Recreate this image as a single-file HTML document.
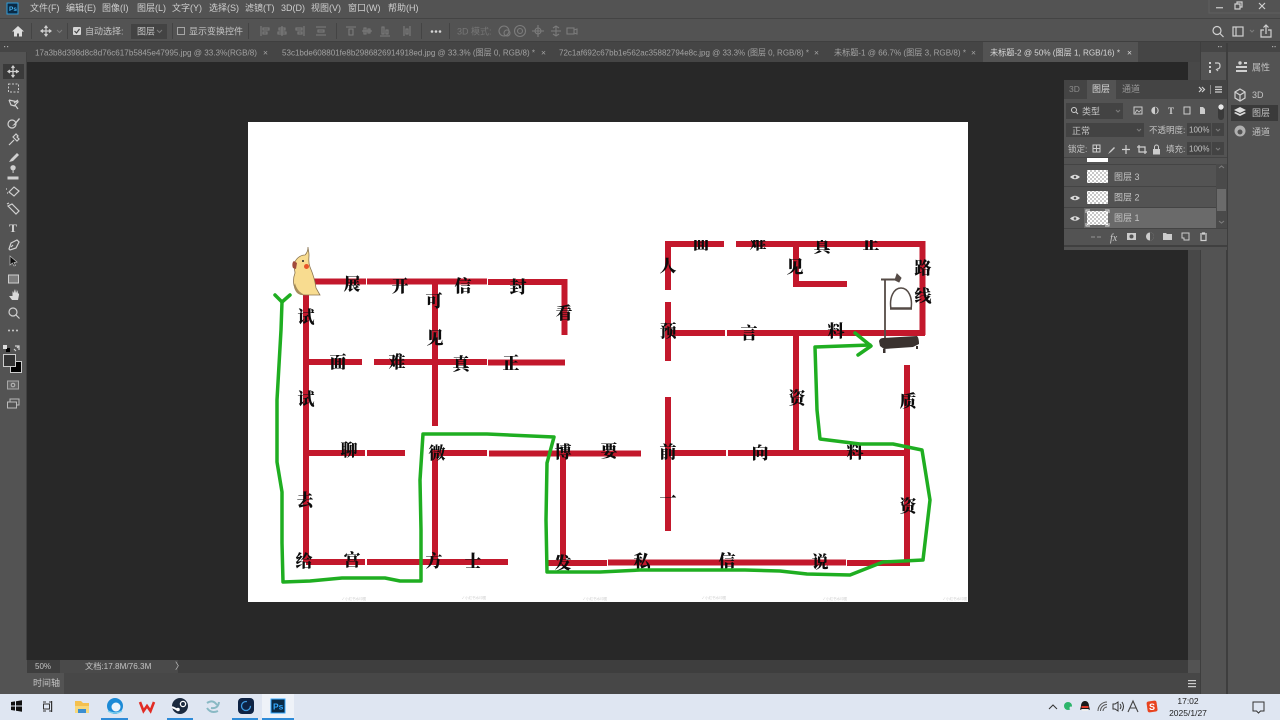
<!DOCTYPE html>
<html lang="zh-CN">
<head>
<meta charset="utf-8">
<title>Photoshop</title>
<style>
html,body{margin:0;padding:0;background:#535353;width:1280px;height:720px;overflow:hidden}
svg{display:block}
text{font-family:"Liberation Sans","Noto Sans CJK SC",sans-serif;font-size:9px;fill:#c4c4c4}
.m text{font-size:9px;fill:#cfcfcf}
.tab{font-size:8.5px;fill:#a2a2a2}
.ch text{font-family:"Liberation Serif","Noto Serif CJK SC",serif;font-size:17px;font-weight:900;fill:#0c0c0c;text-anchor:middle}
.wm{font-size:3.5px;fill:#cfcfcf;text-anchor:middle}
.ic{fill:none;stroke:#d0d0d0;stroke-width:1.2}
.dim{fill:none;stroke:#7c7c7c;stroke-width:1.1}
.sm{fill:#bdbdbd}
</style>
</head>
<body>
<svg width="1280" height="720" viewBox="0 0 1280 720" xmlns="http://www.w3.org/2000/svg">
<defs><clipPath id="topc"><rect x="660" y="240" width="270" height="30"/></clipPath></defs>

<!-- base -->
<rect width="1280" height="720" fill="#535353"/>
<rect x="0" y="18" width="1280" height="1" fill="#444"/>
<rect x="0" y="41" width="1280" height="1" fill="#3f3f3f"/>

<!-- menu bar -->
<rect x="7" y="3" width="11" height="11" fill="#0a2a45" stroke="#2f9bd8" stroke-width="1"/>
<text x="9" y="11" style="font-size:6.5px;fill:#45b2ef;font-weight:bold">Ps</text>
<g class="m">
<text x="30" y="11">文件(F)</text>
<text x="66" y="11">编辑(E)</text>
<text x="102" y="11">图像(I)</text>
<text x="137" y="11">图层(L)</text>
<text x="172" y="11">文字(Y)</text>
<text x="209" y="11">选择(S)</text>
<text x="245" y="11">滤镜(T)</text>
<text x="281" y="11">3D(D)</text>
<text x="311" y="11">视图(V)</text>
<text x="348" y="11">窗口(W)</text>
<text x="388" y="11">帮助(H)</text>
</g>
<!-- window controls -->
<rect x="1209" y="-1" width="72" height="14" fill="none" stroke="#5f5f5f"/>
<rect x="1216" y="7" width="7" height="1.4" fill="#bbb"/>
<path d="M1235 4h5v5h-5zM1237 4v-2h5v5h-2" class="ic" stroke-width="1"/>
<path d="M1259 3l6 6M1265 3l-6 6" class="ic"/>

<!-- options bar -->
<path d="M18 26l6 5.500h-2v5h-3v-3h-2v3h-3v-5h-2z" fill="#dedede"/>
<rect x="31" y="23" width="1" height="16" fill="#444"/>
<path d="M46 26v10M41 31h10M44.500 28l1.500-2 1.500 2M44.500 34l1.500 2 1.500-2M43 29.500l-2 1.500 2 1.500M49 29.500l2 1.500-2 1.500" class="ic"/>
<path d="M57 30l2.500 2.500 2.500-2.500" class="dim"/>
<rect x="67" y="23" width="1" height="16" fill="#444"/>
<rect x="73" y="27" width="8" height="8" rx="1" fill="#d5d5d5"/>
<path d="M74.500 31l2 2 3-4" fill="none" stroke="#444" stroke-width="1.200"/>
<text x="85" y="34.500">自动选择:</text>
<rect x="131" y="24" width="36" height="15" fill="#434343"/>
<text x="137" y="34.500">图层</text>
<path d="M157 30l2.500 2.500 2.500-2.500" class="dim"/>
<rect x="172" y="23" width="1" height="16" fill="#444"/>
<rect x="177.500" y="27.500" width="7" height="7" fill="none" stroke="#a5a5a5"/>
<text x="189" y="34.500">显示变换控件</text>
<rect x="248" y="23" width="1" height="16" fill="#444"/>
<g class="dim" stroke-width="1.300">
<path d="M261 26v10M263 28h6v2h-6zM263 32h4v2h-4z"/>
<path d="M282 26v10M279 28h6v2h-6zM278 32h8v2h-8z"/>
<path d="M304 26v10M296 28h6v2h-6zM298 32h4v2h-4z"/>
<path d="M316 27h10M316 35h10M318 30h6v2h-6z"/>
<path d="M346 27h10M349 29h4v6h-4z"/>
<path d="M362 31h10M364 28h2v6h-2zM368 29h2v4h-2z"/>
<path d="M380 36h10M382 27h2v7h-2zM386 30h2v4h-2z"/>
<path d="M404 26v10M410 26v10M406 29h2v5h-2z"/>
</g>
<rect x="336" y="23" width="1" height="16" fill="#444"/>
<rect x="421" y="23" width="1" height="16" fill="#444"/>
<circle cx="432" cy="31.500" r="1.300" fill="#d5d5d5"/><circle cx="436" cy="31.500" r="1.300" fill="#d5d5d5"/><circle cx="440" cy="31.500" r="1.300" fill="#d5d5d5"/>
<rect x="449" y="23" width="1" height="16" fill="#444"/>
<text x="457" y="34.500" style="fill:#767676">3D 模式:</text>
<g class="dim">
<circle cx="504" cy="31" r="5"/><circle cx="507" cy="33" r="3"/>
<circle cx="520" cy="31" r="5.500"/><circle cx="520" cy="31" r="2.500"/>
<path d="M538 25v12M532 31h12"/><circle cx="538" cy="31" r="3"/>
<path d="M556 26v10M551 31h10M553 28l3-2 3 2M553 34l3 2 3-2"/>
<rect x="567" y="28" width="7" height="6"/><path d="M574 30l3-1v5l-3-1"/>
</g>
<circle cx="1217" cy="30.500" r="4" class="ic"/><path d="M1220 33.500l3.500 3.500" class="ic"/>
<rect x="1233" y="27" width="10" height="9" class="ic"/><path d="M1236 27v9" class="ic"/>
<path d="M1250 30l2 2 2-2" class="dim"/>
<path d="M1264 30h-3v7h10v-7h-3M1266 34v-9M1263.500 27.500l2.500-2.500 2.500 2.500" class="ic"/>

<!-- tab strip + canvas bg -->
<rect x="0" y="42" width="1280" height="20" fill="#454545"/>
<rect x="27" y="62" width="1161" height="598" fill="#282828"/>
<rect x="983" y="42" width="155" height="20" fill="#535353"/>
<text class="tab" x="35" y="55.500" textLength="222" lengthAdjust="spacingAndGlyphs">17a3b8d398d8c8d76c617b5845e47995.jpg @ 33.3%(RGB/8)</text>
<text class="tab" x="263" y="55.500">×</text>
<text class="tab" x="282" y="55.500" textLength="253" lengthAdjust="spacingAndGlyphs">53c1bde608801fe8b2986826914918ed.jpg @ 33.3% (图层 0, RGB/8) *</text>
<text class="tab" x="541" y="55.500">×</text>
<text class="tab" x="559" y="55.500" textLength="250" lengthAdjust="spacingAndGlyphs">72c1af692c67bb1e562ac35882794e8c.jpg @ 33.3% (图层 0, RGB/8) *</text>
<text class="tab" x="814" y="55.500">×</text>
<text class="tab" x="834" y="55.500" textLength="132" lengthAdjust="spacingAndGlyphs">未标题-1 @ 66.7% (图层 3, RGB/8) *</text>
<text class="tab" x="971" y="55.500">×</text>
<text class="tab" x="990" y="55.500" textLength="130" lengthAdjust="spacingAndGlyphs" style="fill:#d8d8d8">未标题-2 @ 50% (图层 1, RGB/16) *</text>
<text class="tab" x="1127" y="55.500" style="fill:#d8d8d8">×</text>

<!-- left toolbar -->
<rect x="0" y="52" width="27" height="642" fill="#535353"/>
<rect x="26" y="52" width="1" height="608" fill="#404040"/>
<rect x="4" y="46" width="1.200" height="1.200" fill="#aaa"/><rect x="7" y="46" width="1.200" height="1.200" fill="#aaa"/>
<rect x="3" y="64" width="21" height="15" fill="#3a3a3a"/>
<path d="M13 66v11M8 71.500h11M11.500 68l1.500-2 1.500 2M11.500 75l1.500 2 1.500-2M10 70l-2 1.500 2 1.500M16 70l2 1.500-2 1.500" class="ic"/>
<rect x="8.500" y="84" width="10" height="8" fill="none" stroke="#c8c8c8" stroke-dasharray="2 1.500"/>
<path d="M9 100l9 2-3 3 3 4M9 100l2 5 4 1M18 100l-4 3" class="ic"/>
<circle cx="12" cy="124" r="4" class="ic"/><path d="M19 118l-5 6-2 2 3-1 5-6z" fill="#d0d0d0"/>
<path d="M9 145l5-5M13 137l4 4 2-2-2-2 1-1-2-2-1 1-2 2z" class="ic"/>
<path d="M9 162l2-3 6-6 2 2-6 6z" fill="#d0d0d0"/>
<path d="M13 170a2.200 2.200 0 1 1 .1 0v3M8 177h10v2h-10z" fill="#d0d0d0" stroke="#d0d0d0"/>
<path d="M9 192l5-5 5 4-5 5zM6 189h1M7 193h1" class="ic"/>
<path d="M8 206l4-2 7 7-3 3-7-7zM7 204l2-1" class="ic"/>
<text x="9" y="232" style="font-size:12px;font-weight:bold;fill:#d5d5d5;font-family:'Liberation Serif',serif">T</text>
<path d="M9 249l2-6 6-3 2 2-3 6-6 2zM11 247l2-2" class="ic"/>
<path d="M10 256l7 6-3 .5 1.500 3-1.500 .5-1.500-3-2.500 2z" fill="#101010" stroke="#bbb" stroke-width=".7"/>
<rect x="8.500" y="275" width="10" height="8" fill="#7d7d7d" stroke="#cfcfcf"/>
<path d="M9 296l3 4h6l1-5v-2l-1 1-.5-4-1 3-.5-4-1 4-.5-4-1 4-1-2v5z" fill="#d8d8d8"/>
<circle cx="13" cy="312" r="4" class="ic"/><path d="M16 315l3.500 3.500" class="ic" stroke-width="1.600"/>
<circle cx="9" cy="330.500" r="1" fill="#ccc"/><circle cx="13" cy="330.500" r="1" fill="#ccc"/><circle cx="17" cy="330.500" r="1" fill="#ccc"/>
<rect x="6" y="348" width="4" height="4" fill="#000"/><rect x="3" y="345" width="4" height="4" fill="#ddd"/>
<path d="M15 346h4v4M19 346l-2 2M14 349l2 2" class="ic" stroke-width=".9"/>
<rect x="10.500" y="361.500" width="11" height="11" fill="#000" stroke="#ccc"/>
<rect x="3.500" y="354.500" width="12" height="12" fill="#333" stroke="#ccc"/>
<rect x="7.500" y="381" width="11" height="8" fill="#656565" stroke="#a8a8a8"/><circle cx="13" cy="385" r="1.800" fill="none" stroke="#bbb"/>
<rect x="10" y="399" width="9" height="6" fill="none" stroke="#bbb"/><rect x="7.500" y="402" width="9" height="6" fill="#535353" stroke="#bbb"/>

<!-- canvas -->
<rect x="248" y="122" width="720" height="480" fill="#fff"/>
<text class="wm" x="354" y="600">✓ 小红书水印图</text>
<text class="wm" x="474" y="599">✓ 小红书水印图</text>
<text class="wm" x="595" y="600">✓ 小红书水印图</text>
<text class="wm" x="714" y="599">✓ 小红书水印图</text>
<text class="wm" x="835" y="600">✓ 小红书水印图</text>
<text class="wm" x="955" y="600">✓ 小红书水印图</text>

<!-- red maze -->
<g fill="none" stroke="#c3182c" stroke-width="6">
<path d="M303 281.500H366M367 281.500H487M488 282H567"/>
<path d="M564.500 279V335"/>
<path d="M306 282V562"/>
<path d="M306 362H362M374 362H487M488 362.500H565"/>
<path d="M435 282V426"/>
<path d="M306 453H365M367 453H405"/>
<path d="M435 453H487M489 453.500H641"/>
<path d="M435 450V562"/>
<path d="M306 562H365M367 562H508"/>
<path d="M563 453V563"/>
<path d="M548 563H607M608 562.500H846M847 563H910"/>
<path d="M668 453H726M728 453H907"/>
<path d="M668 397V531"/>
<path d="M796 333V453"/>
<path d="M907 365V566"/>
<path d="M665 244H724M736 244H925"/>
<path d="M922.500 241V335"/>
<path d="M668 241V290M668 302V361"/>
<path d="M668 333H725M727 333H925"/>
<path d="M796 244V287M793 284H847"/>
</g>

<!-- characters -->
<g class="ch">
<text x="352" y="290">展</text><text x="400" y="292">开</text><text x="463" y="292">信</text><text x="518" y="293">封</text>
<text x="434" y="307">可</text><text x="435" y="344">见</text><text x="564" y="319">看</text>
<text x="306" y="323">试</text><text x="306" y="405">试</text>
<text x="338" y="368">面</text><text x="397" y="368">难</text><text x="461" y="370">真</text><text x="511" y="369">正</text>
<text x="349" y="456">聊</text><text x="437" y="459">微</text><text x="563" y="458">博</text><text x="609" y="457">要</text>
<text x="668" y="458">前</text><text x="760" y="459">向</text><text x="855" y="458">料</text>
<text x="305" y="506">去</text><text x="668" y="504">一</text>
<text x="304" y="567">给</text><text x="352" y="566">宫</text><text x="434" y="567">方</text><text x="473" y="567">士</text>
<text x="563" y="569">发</text><text x="642" y="567">私</text><text x="727" y="567">信</text><text x="820" y="568">说</text>
<text x="908" y="512">资</text><text x="908" y="407">质</text><text x="797" y="404">资</text>
<text x="668" y="337">预</text><text x="749" y="339">言</text><text x="836" y="337">料</text>
<text x="668" y="272">人</text><text x="795" y="273">见</text><text x="923" y="274">路</text><text x="923" y="302">线</text>
<g clip-path="url(#topc)">
<text x="701" y="249">面</text><text x="758" y="249">难</text><text x="822" y="252">真</text><text x="871" y="249">正</text>
</g>
</g>

<!-- bird -->
<path d="M308 247c0 4-1 6-3 8-5 0-10 4-11 10 0 4 1 6 1 8-2 5-2 11 0 15 2 5 6 7 10 7h15l-4-7c-1-8-3-14-6-21-2-5-1-8-1-12 0-3-1-6-1-8z" fill="#f8dc90" stroke="#8a7450" stroke-width=".8"/>
<path d="M295 283c1 5 4 9 8 11l-2 1c-4-1-6-4-7-8z" fill="#a68d5c"/>
<path d="M294 261c-2 1-2 5-1 7l3 1 1-6z" fill="#a14a3c"/>
<circle cx="306.500" cy="266.500" r="2.500" fill="#e8552a"/>
<circle cx="303" cy="261" r="1" fill="#222"/>

<!-- perch -->
<g fill="none" stroke="#554b46">
<path d="M885 280V338" stroke-width="1.800"/>
<path d="M881 279.500h19" stroke-width="2"/>
<path d="M897 274l4 4-2 4-4-2z" fill="#554b46" stroke-width="1"/>
<path d="M891 309c-2-12 3-21 10-21 7 0 12 9 10 21" stroke-width="1.500"/>
<path d="M890 308.500h22" stroke-width="2.500"/>
</g>
<path d="M879 341q1-3 4-3l34-2q2 2 2 8l-6 3-29 2-4-3z" fill="#3a322f"/>
<rect x="883" y="349" width="2.500" height="4" fill="#3a322f"/>
<rect x="916" y="346" width="2" height="3" fill="#3a322f"/>

<!-- green path -->
<g fill="none" stroke="#1fae21" stroke-width="3.500" stroke-linejoin="round" stroke-linecap="round">
<path d="M275 295l7 7 8-7"/>
<path d="M282 302L281 330 277 400 277 462 282 492 282 543 283 582 310 581 342 578 385 578 400 581 421 581 421 530 420 480 423 434 487 434 554 437 547 463 546 520 547 572 600 572 640 570 745 570 780 571 807 574 850 575 883 562 923 560 930 500 922 450 893 444 860 444 820 439 817 410 815 347 870 345"/>
<path d="M855 333l16 13-13 9"/>
</g>

<!-- right dock -->
<rect x="1188" y="62" width="12" height="598" fill="#484848"/>
<rect x="1200" y="42" width="1" height="652" fill="#3e3e3e"/>
<rect x="1201" y="43" width="25" height="651" fill="#535353"/>
<rect x="1226" y="43" width="2" height="651" fill="#3e3e3e"/>
<rect x="1228" y="43" width="52" height="651" fill="#535353"/>
<rect x="1201" y="43" width="25" height="9" fill="#454545"/>
<rect x="1228" y="43" width="52" height="9" fill="#454545"/>
<rect x="1218" y="46" width="1.200" height="1.200" fill="#aaa"/><rect x="1220.500" y="46" width="1.200" height="1.200" fill="#aaa"/>
<rect x="1272" y="46" width="1.200" height="1.200" fill="#aaa"/><rect x="1274.500" y="46" width="1.200" height="1.200" fill="#aaa"/>
<path d="M1209 62h2v2h-2zM1209 66h2v2h-2zM1209 70h2v3h-2z" fill="#d0d0d0"/>
<path d="M1215 63h3q2 0 2 3t-3 3M1216 69l2 2" class="ic"/>
<circle cx="1240" cy="63" r="1.700" fill="#d0d0d0"/><rect x="1244" y="62" width="3" height="2" fill="#d0d0d0"/><rect x="1236" y="66" width="11" height="2" fill="#d0d0d0"/><rect x="1236" y="70" width="11" height="2" fill="#d0d0d0"/>
<text x="1252" y="70.500">属性</text>
<path d="M1240 89l5 3v6l-5 3-5-3v-6zM1235 92l5 3 5-3M1240 95v6" class="ic"/>
<text x="1252" y="98">3D</text>
<rect x="1231" y="105" width="47" height="16" fill="#3a3a3a"/>
<path d="M1240 107l6 3-6 3-6-3zM1234 113l6 3 6-3-1.500-1-4.500 2-4.500-2z" fill="#ddd"/>
<text x="1252" y="116">图层</text>
<circle cx="1240" cy="131" r="5.500" fill="#b0b0b0"/><circle cx="1240" cy="132" r="2.500" fill="#535353"/>
<text x="1252" y="135">通道</text>

<!-- layers panel -->
<rect x="1064" y="80" width="163" height="170" fill="#535353"/>
<rect x="1064" y="80" width="163" height="19" fill="#444"/>
<rect x="1087" y="80" width="29" height="19" fill="#535353"/>
<text x="1069" y="92" style="fill:#8b8b8b;font-size:8.500px">3D</text>
<text x="1092" y="92" style="fill:#d8d8d8">图层</text>
<text x="1122" y="92" style="fill:#9b9b9b">通道</text>
<path d="M1199 87l2.500 2.500-2.500 2.500M1202 87l2.500 2.500-2.500 2.500" class="ic" stroke-width=".9"/>
<rect x="1210" y="85" width="1" height="9" fill="#8a8a8a"/>
<path d="M1215 87h7M1215 89.500h7M1215 92h7" class="ic" stroke-width=".9"/>
<rect x="1066" y="103" width="57" height="16" fill="#434343"/>
<circle cx="1074" cy="110" r="2.500" fill="none" stroke="#d0d0d0"/><path d="M1076 112l2 2" stroke="#d0d0d0"/>
<text x="1082" y="114.500">类型</text>
<path d="M1116 110l2 2 2-2" class="dim"/>
<rect x="1134" y="107" width="8" height="7" fill="none" stroke="#ccc"/><path d="M1135 113l2-3 2 2 2-2" stroke="#ccc" fill="none" stroke-width=".8"/>
<circle cx="1155" cy="110.500" r="3.700" fill="#ccc"/><path d="M1155 107a3.700 3.700 0 0 1 0 7z" fill="#535353"/>
<text x="1168" y="114" style="font-size:9px;font-weight:bold;font-family:'Liberation Serif',serif;fill:#ccc">T</text>
<rect x="1184" y="107" width="6" height="7" fill="none" stroke="#ccc"/>
<path d="M1200 107h3l2 2v5h-5z" fill="#ccc"/>
<rect x="1218" y="104" width="6" height="16" rx="3" fill="#3a3a3a"/><circle cx="1221" cy="107" r="2.700" fill="#e8e8e8"/>

<rect x="1066" y="123" width="78" height="14" fill="#434343"/>
<text x="1072" y="134">正常</text>
<path d="M1137 129l2 2 2-2" class="dim"/>
<text x="1149" y="133" style="font-size:8.500px">不透明度:</text>
<rect x="1187" y="123" width="24" height="13" fill="#434343"/>
<text x="1189" y="132.500" style="font-size:8px">100%</text>
<rect x="1212" y="123" width="12" height="13" fill="#434343"/>
<path d="M1216 129l2 2 2-2" class="dim"/>

<text x="1068" y="152" style="font-size:8.500px">锁定:</text>
<rect x="1093" y="145" width="7" height="7" fill="none" stroke="#ccc"/><path d="M1093 148.500h7M1096.500 145v7" stroke="#ccc"/>
<path d="M1108 154l2-3 4-4 1 1-4 4z" fill="#ccc"/>
<path d="M1126 145v9M1122 149.500h8" class="ic"/>
<path d="M1139 145v7h8M1137 147h8v7" class="ic" stroke-width=".9"/>
<rect x="1153" y="149" width="7" height="5.500" fill="#ccc"/><path d="M1154.500 149v-2a2 2 0 0 1 4 0v2" fill="none" stroke="#ccc"/>
<text x="1166" y="152" style="font-size:8.500px">填充:</text>
<rect x="1187" y="142" width="24" height="13" fill="#434343"/>
<text x="1189" y="151.500" style="font-size:8px">100%</text>
<rect x="1212" y="142" width="12" height="13" fill="#434343"/>
<path d="M1216 148l2 2 2-2" class="dim"/>
<rect x="1064" y="157" width="163" height="1" fill="#444"/>

<!-- layer rows -->
<rect x="1087" y="158" width="21" height="4" fill="#fff"/>
<rect x="1064" y="164" width="152" height="1" fill="#444"/>
<rect x="1064" y="186" width="152" height="1" fill="#444"/>
<rect x="1064" y="207" width="152" height="1" fill="#444"/>
<rect x="1084" y="208" width="132" height="20" fill="#6a6a6a"/>
<g fill="#dcdcdc">
<path d="M1070 177q5-4.500 10 0q-5 4.500-10 0z"/><circle cx="1075" cy="177" r="1.300" fill="#535353"/>
<path d="M1070 198q5-4.500 10 0q-5 4.500-10 0z"/><circle cx="1075" cy="198" r="1.300" fill="#535353"/>
<path d="M1070 218.500q5-4.500 10 0q-5 4.500-10 0z"/><circle cx="1075" cy="218.500" r="1.300" fill="#535353"/>
</g>
<defs><pattern id="chk" width="4" height="4" patternUnits="userSpaceOnUse"><rect width="4" height="4" fill="#fff"/><rect width="2" height="2" fill="#c8c8c8"/><rect x="2" y="2" width="2" height="2" fill="#c8c8c8"/></pattern></defs>
<rect x="1087" y="170" width="21" height="13" fill="url(#chk)"/>
<rect x="1087" y="191" width="21" height="13" fill="url(#chk)"/>
<rect x="1087" y="211" width="21" height="14" fill="url(#chk)"/>
<path d="M1086 213v-3h4M1105 210h4v3M1086 223v3h4M1105 226h4v-3" fill="none" stroke="#ddd"/>
<text x="1114" y="180">图层 3</text>
<text x="1114" y="200.500">图层 2</text>
<text x="1114" y="221">图层 1</text>
<rect x="1216" y="164" width="11" height="64" fill="#4a4a4a"/>
<rect x="1217" y="189" width="9" height="22" fill="#6b6b6b"/>
<path d="M1219 168l2.500-2 2.500 2M1219 221l2.500 2 2.500-2" class="dim"/>

<!-- layers footer -->
<rect x="1064" y="228" width="163" height="1" fill="#444"/>
<rect x="1064" y="245" width="163" height="2" fill="#404040"/>
<g>
<path d="M1091 237h4M1097 237h4" stroke="#7f7f7f" stroke-width="1.500" fill="none"/>
<text x="1110" y="241" style="font-size:10px;font-style:italic;font-family:'Liberation Serif',serif;fill:#ccc">fx</text>
<rect x="1127" y="233" width="9" height="7" fill="#ccc"/><circle cx="1131.500" cy="236.500" r="2" fill="#535353"/>
<circle cx="1150" cy="236.500" r="4" fill="#ccc"/><path d="M1150 232.500a4 4 0 0 1 0 8z" fill="#535353"/>
<path d="M1163 233h3l1 1h5v6h-9z" fill="#ccc"/>
<path d="M1182 233h7v7h-5v-2h-2z" fill="none" stroke="#ccc"/>
<path d="M1200 234h7M1201 235v5.500h5V235M1202.500 234v-1h2v1" class="ic" stroke-width=".9"/>
</g>

<!-- status bar -->
<rect x="27" y="660" width="1161" height="13" fill="#3e3e3e"/>
<rect x="60" y="660" width="118" height="13" fill="#4a4a4a"/>
<text x="35" y="669" style="font-size:8px">50%</text>
<text x="85" y="669" style="font-size:8.200px">文档:17.8M/76.3M</text>
<text x="175" y="669" style="font-size:9px">〉</text>
<!-- timeline -->
<rect x="27" y="673" width="1173" height="21" fill="#474747"/>
<rect x="27" y="673" width="37" height="21" fill="#535353"/>
<text x="33" y="686" style="font-size:9px">时间轴</text>
<rect x="1188" y="680" width="8" height="1.200" fill="#ccc"/><rect x="1188" y="683" width="8" height="1.200" fill="#ccc"/><rect x="1188" y="686" width="8" height="1.200" fill="#ccc"/>

<!-- taskbar -->
<rect x="0" y="694" width="1280" height="26" fill="#dfe6f2"/>
<path d="M11 702l4-.6v4.100h-4zM16 701.200l6-1v5.300h-6zM11 706.500h4v4.100l-4-.6zM16 706.500h6v5.300l-6-1z" fill="#111"/>
<path d="M43 702h3M43 711h3M49 702h2M49 711h2" stroke="#333" fill="none"/><rect x="43.500" y="704" width="6" height="5" fill="none" stroke="#333"/><rect x="51" y="701" width="1.200" height="11" fill="#333"/>
<path d="M75 701h6l2 2h6v10h-14z" fill="#f4c04e"/><rect x="75" y="706" width="14" height="7" fill="#f7d87c"/><rect x="78" y="709" width="8" height="4" fill="#3b8ed0"/>
<rect x="262" y="694" width="32" height="26" fill="#eef2f8"/>
<circle cx="115" cy="706" r="8" fill="#1c8ad6"/><circle cx="116" cy="707" r="4.500" fill="#eef5fb"/><path d="M108 711q7 4 14 0" stroke="#7fd0ee" stroke-width="1.500" fill="none"/>
<path d="M140 702l3.500 9 3.500-5 3.500 5 3.500-9" fill="none" stroke="#e22c24" stroke-width="2.600"/>
<circle cx="180" cy="706" r="8" fill="#1b2a3f"/><circle cx="183" cy="704" r="2.600" fill="none" stroke="#fff" stroke-width="1.300"/><path d="M172 707l6 3" stroke="#fff" stroke-width="2"/><circle cx="178" cy="709.500" r="1.800" fill="#fff"/>
<g fill="none" stroke="#89b9c4" stroke-width="2"><path d="M207 703q6-4 10 2"/><path d="M219 702q-1 7-8 6"/><path d="M207 708q4 6 11 3"/></g>
<rect x="238" y="698" width="16" height="16" rx="4" fill="#0e2344"/><circle cx="246" cy="706" r="4.500" fill="none" stroke="#3e9ae0" stroke-width="1.300" stroke-dasharray="22 6"/>
<rect x="271" y="699" width="14" height="14" fill="#0a2a45" stroke="#31a8ff"/>
<text x="273" y="709.500" style="font-size:8.500px;font-weight:bold;fill:#31a8ff">Ps</text>
<rect x="101" y="718" width="27" height="2" fill="#2e8bd8"/>
<rect x="167" y="718" width="26" height="2" fill="#2e8bd8"/>
<rect x="232" y="718" width="26" height="2" fill="#2e8bd8"/>
<rect x="262" y="718" width="32" height="2" fill="#2e8bd8"/>

<!-- tray -->
<path d="M1049 709l4-4 4 4" fill="none" stroke="#333"/>
<circle cx="1068" cy="706" r="4" fill="#2cb56b"/><circle cx="1071" cy="708" r="1.500" fill="#dfe6f2"/>
<path d="M1085 701c-3 0-4 3-4 5l-1 4 2-1c1 2 5 2 6 0l2 1-1-4c0-2-1-5-4-5z" fill="#1a1a1a"/><rect x="1081.500" y="706" width="7" height="2" fill="#e03a2a"/><path d="M1082 709h6v2h-6z" fill="#eee"/>
<path d="M1098 711a9 9 0 0 1 9-9M1100.500 711a6.500 6.500 0 0 1 6.500-6.500M1103 711a4 4 0 0 1 4-4" fill="none" stroke="#555"/>
<path d="M1113 704h2l3-2v9l-3-2h-2zM1120 704q2 2.500 0 5M1122 702q3 4.500 0 9" fill="none" stroke="#333"/>
<path d="M1128 712l5-11 5 11M1130 708h6" fill="none" stroke="#444" stroke-width="1.100"/>
<rect x="1147" y="701" width="10" height="11" rx="2" fill="#e8431f" transform="rotate(-8 1152 706)"/>
<text x="1149" y="710" style="font-size:9px;font-weight:bold;fill:#fff">S</text>
<text x="1188" y="704" style="font-size:8.500px;fill:#222;text-anchor:middle">17:02</text>
<text x="1188" y="716" style="font-size:8.500px;fill:#222;text-anchor:middle">2025/1/27</text>
<path d="M1253 702h11v9h-3.500l-2 2-2-2h-3.500z" fill="none" stroke="#333"/>
</svg>
</body>
</html>
